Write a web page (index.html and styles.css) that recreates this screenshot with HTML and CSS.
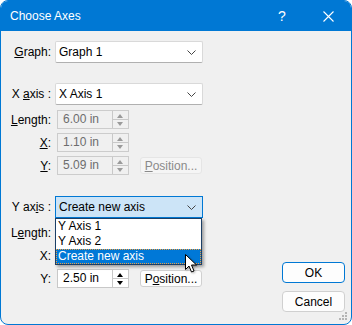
FILE: index.html
```html
<!DOCTYPE html>
<html lang="en">
<head>
    <meta charset="UTF-8">
    <title>Choose Axes</title>
    <link rel="stylesheet" href="styles.css">
</head>
<body>

<div class="dialog">
    <!-- Title bar -->
    <div class="titlebar">
        <span class="title">Choose Axes</span>
        <span class="tb-btn help">?</span>
        <span class="tb-btn">
            <svg width="11" height="11" viewBox="0 0 11 11"><path d="M0.5 0.5 L10.5 10.5 M10.5 0.5 L0.5 10.5" stroke="#fff" stroke-width="1.1"/></svg>
        </span>
    </div>

    <div class="content">
        <div class="form">
            <!-- Graph -->
            <div class="row graph-row">
                <label><u>G</u>raph:</label>
                <div class="combo">
                    <span>Graph 1</span>
                    <svg class="chev" width="9" height="5" viewBox="0 0 9 5"><path d="M0.5 0.5 L4.5 4.5 L8.5 0.5" fill="none" stroke="#444" stroke-width="1"/></svg>
                </div>
            </div>

            <!-- X axis -->
            <div class="row axis-row">
                <label>X <u>a</u>xis :</label>
                <div class="combo">
                    <span>X Axis 1</span>
                    <svg class="chev" width="9" height="5" viewBox="0 0 9 5"><path d="M0.5 0.5 L4.5 4.5 L8.5 0.5" fill="none" stroke="#444" stroke-width="1"/></svg>
                </div>
            </div>
            <div class="row spin-row first">
                <label><u>L</u>ength:</label>
                <div class="field">
                    <div class="spin disabled"><span class="val">6.00 in</span><span class="arrows"><i class="up"></i><i class="down"></i></span></div>
                </div>
            </div>
            <div class="row spin-row">
                <label><u>X</u>:</label>
                <div class="field">
                    <div class="spin disabled"><span class="val">1.10 in</span><span class="arrows"><i class="up"></i><i class="down"></i></span></div>
                </div>
            </div>
            <div class="row spin-row">
                <label><u>Y</u>:</label>
                <div class="field">
                    <div class="spin disabled"><span class="val">5.09 in</span><span class="arrows"><i class="up"></i><i class="down"></i></span></div>
                    <button class="pos disabled"><u>P</u>osition...</button>
                </div>
            </div>

            <!-- Y axis -->
            <div class="row axis-row y-axis">
                <label>Y ax<u>i</u>s :</label>
                <div class="combo-wrap">
                    <div class="combo open">
                        <span>Create new axis</span>
                        <svg class="chev" width="9" height="5" viewBox="0 0 9 5"><path d="M0.5 0.5 L4.5 4.5 L8.5 0.5" fill="none" stroke="#444" stroke-width="1"/></svg>
                    </div>
                    <div class="listbox">
                        <div class="item">Y Axis 1</div>
                        <div class="item">Y Axis 2</div>
                        <div class="item selected">Create new axis</div>
                    </div>
                </div>
            </div>
            <!-- these two fields sit under the open list -->
            <div class="row spin-row first">
                <label>L<u>e</u>ngth:</label>
                <div class="field">
                    <div class="spin covered"><span class="val">6.00 in</span><span class="arrows"><i class="up"></i><i class="down"></i></span></div>
                </div>
            </div>
            <div class="row spin-row">
                <label>X:</label>
                <div class="field">
                    <div class="spin covered"><span class="val">1.10 in</span><span class="arrows"><i class="up"></i><i class="down"></i></span></div>
                </div>
            </div>
            <div class="row spin-row">
                <label>Y:</label>
                <div class="field">
                    <div class="spin"><span class="val">2.50 in</span><span class="arrows"><i class="up"></i><i class="down"></i></span></div>
                    <button class="pos">P<u>o</u>sition...</button>
                </div>
            </div>
        </div>

        <div class="actions">
            <button class="btn default">OK</button>
            <button class="btn">Cancel</button>
        </div>
    </div>

    <!-- resize grip -->
    <svg class="grip" width="9" height="9" viewBox="0 0 9 9">
        <rect x="6" y="0" width="2" height="2" fill="#b5b5b5"/>
        <rect x="3" y="3" width="2" height="2" fill="#b5b5b5"/>
        <rect x="6" y="3" width="2" height="2" fill="#b5b5b5"/>
        <rect x="0" y="6" width="2" height="2" fill="#b5b5b5"/>
        <rect x="3" y="6" width="2" height="2" fill="#b5b5b5"/>
        <rect x="6" y="6" width="2" height="2" fill="#b5b5b5"/>
    </svg>

    <!-- mouse pointer -->
    <svg class="cursor" width="14" height="21" viewBox="0 0 14 21">
        <path d="M1.5 1.5 L1.5 16.5 L5 13 L7.5 19 L10 18 L7.5 12 L12.5 12 Z" fill="#fff" stroke="#000" stroke-width="1" stroke-linejoin="miter"/>
    </svg>
</div>

</body>
</html>
```

FILE: styles.css
```css
/* General */
body {
    margin: 0;
    font-family: 'Liberation Sans', Arial, sans-serif;
    font-size: 12px;
    color: #000;
    background: #fff;
}

.dialog {
    position: relative;
    box-sizing: border-box;
    width: 352px;
    height: 325px;
    border: 1px solid #0078d4;
    border-radius: 8px;
    background: #f0f0f0;
    overflow: hidden;
    display: flex;
    flex-direction: column;
}

/* Title bar */
.titlebar {
    height: 30px;
    background: #0078d4;
    color: #fff;
    display: flex;
    align-items: center;
}
.title {
    flex: 1;
    padding-left: 9px;
    font-size: 12px;
}
.tb-btn {
    width: 46px;
    height: 30px;
    display: flex;
    align-items: center;
    justify-content: center;
}
.help {
    font-size: 14px;
}

/* Content */
.content {
    flex: 1;
    display: flex;
    justify-content: space-between;
    padding-top: 10px;
}
.form {
    width: 202px;
}
.row {
    display: grid;
    grid-template-columns: 50px 1fr;
    column-gap: 4px;
    align-items: center;
}
.row label {
    text-align: right;
    white-space: nowrap;
}
.axis-row { margin-top: 20px; }
.y-axis { margin-top: 21px; }
.spin-row { margin-top: 4px; }
.spin-row.first { margin-top: 5px; }

/* Combo boxes */
.combo {
    box-sizing: border-box;
    height: 22px;
    display: flex;
    align-items: center;
    justify-content: space-between;
    padding: 0 6px 0 3px;
    background: #fff;
    border: 1px solid #d9d9d9;
    border-bottom-color: #b0b0b0;
    border-radius: 2px;
}
.combo.open {
    background: #cce4f7;
    border-color: #0078d4;
    border-radius: 0;
}
.combo-wrap {
    position: relative;
}
.listbox {
    position: absolute;
    top: 22px;
    left: 0;
    right: 1px;
    background: #fff;
    border: 1px solid #1c3f66;
    box-shadow: 2px 2px 3px rgba(0, 0, 0, 0.35);
    z-index: 2;
}
.item {
    height: 15px;
    line-height: 15px;
    padding-left: 2px;
}
.item.selected {
    box-sizing: border-box;
    line-height: 13px;
    padding-left: 1px;
    background: #0078d7;
    color: #fff;
    border: 1px dotted #f0a040;
}

/* Spin boxes */
.field {
    display: flex;
    align-items: center;
    padding-left: 2px;
}
.spin {
    box-sizing: border-box;
    width: 72px;
    height: 19px;
    display: flex;
    background: #fff;
    border: 1px solid #c8c8c8;
}
.spin .val {
    flex: 1;
    padding-left: 5px;
    line-height: 17px;
}
.spin.covered .val {
    visibility: hidden;
}
.spin .arrows {
    width: 15px;
    display: flex;
    flex-direction: column;
    border-left: 1px solid #c8c8c8;
}
.arrows i {
    flex: 1;
    position: relative;
}
.arrows i + i {
    border-top: 1px solid #c8c8c8;
}
.arrows i::after {
    content: "";
    position: absolute;
    left: 4px;
    top: 3px;
    border-left: 3px solid transparent;
    border-right: 3px solid transparent;
}
.arrows .up::after { border-bottom: 4px solid #000; }
.arrows .down::after { border-top: 4px solid #000; top: 2px; }

.spin.disabled {
    background: #f0f0f0;
    color: #6d6d6d;
    border-color: #cccccc;
}
.spin.disabled .arrows .up::after { border-bottom-color: #9a9a9a; }
.spin.disabled .arrows .down::after { border-top-color: #9a9a9a; }

/* Buttons */
.pos {
    margin-left: 11px;
    width: 62px;
    height: 17px;
    padding: 0;
    font-family: inherit;
    font-size: 12px;
    color: #000;
    background: #fdfdfd;
    border: 1px solid #d0d0d0;
    border-radius: 3px;
}
.pos.disabled {
    color: #8a8a8a;
    background: #f5f5f5;
    border-color: #e5e5e5;
}
.actions {
    display: flex;
    flex-direction: column;
    justify-content: flex-end;
    gap: 8px;
    padding: 0 6px 12px 0;
}
.btn {
    width: 63px;
    height: 21px;
    padding: 0;
    font-family: inherit;
    font-size: 12px;
    color: #000;
    background: #fdfdfd;
    border: 1px solid #d0d0d0;
    border-radius: 4px;
}
.btn.default {
    border-color: #0078d4;
}

/* Overlays */
.grip {
    position: absolute;
    right: 3px;
    bottom: 3px;
}
.cursor {
    position: absolute;
    left: 183px;
    top: 252px;
    z-index: 3;
    filter: drop-shadow(1px 1px 1px rgba(0, 0, 0, 0.3));
}
```
